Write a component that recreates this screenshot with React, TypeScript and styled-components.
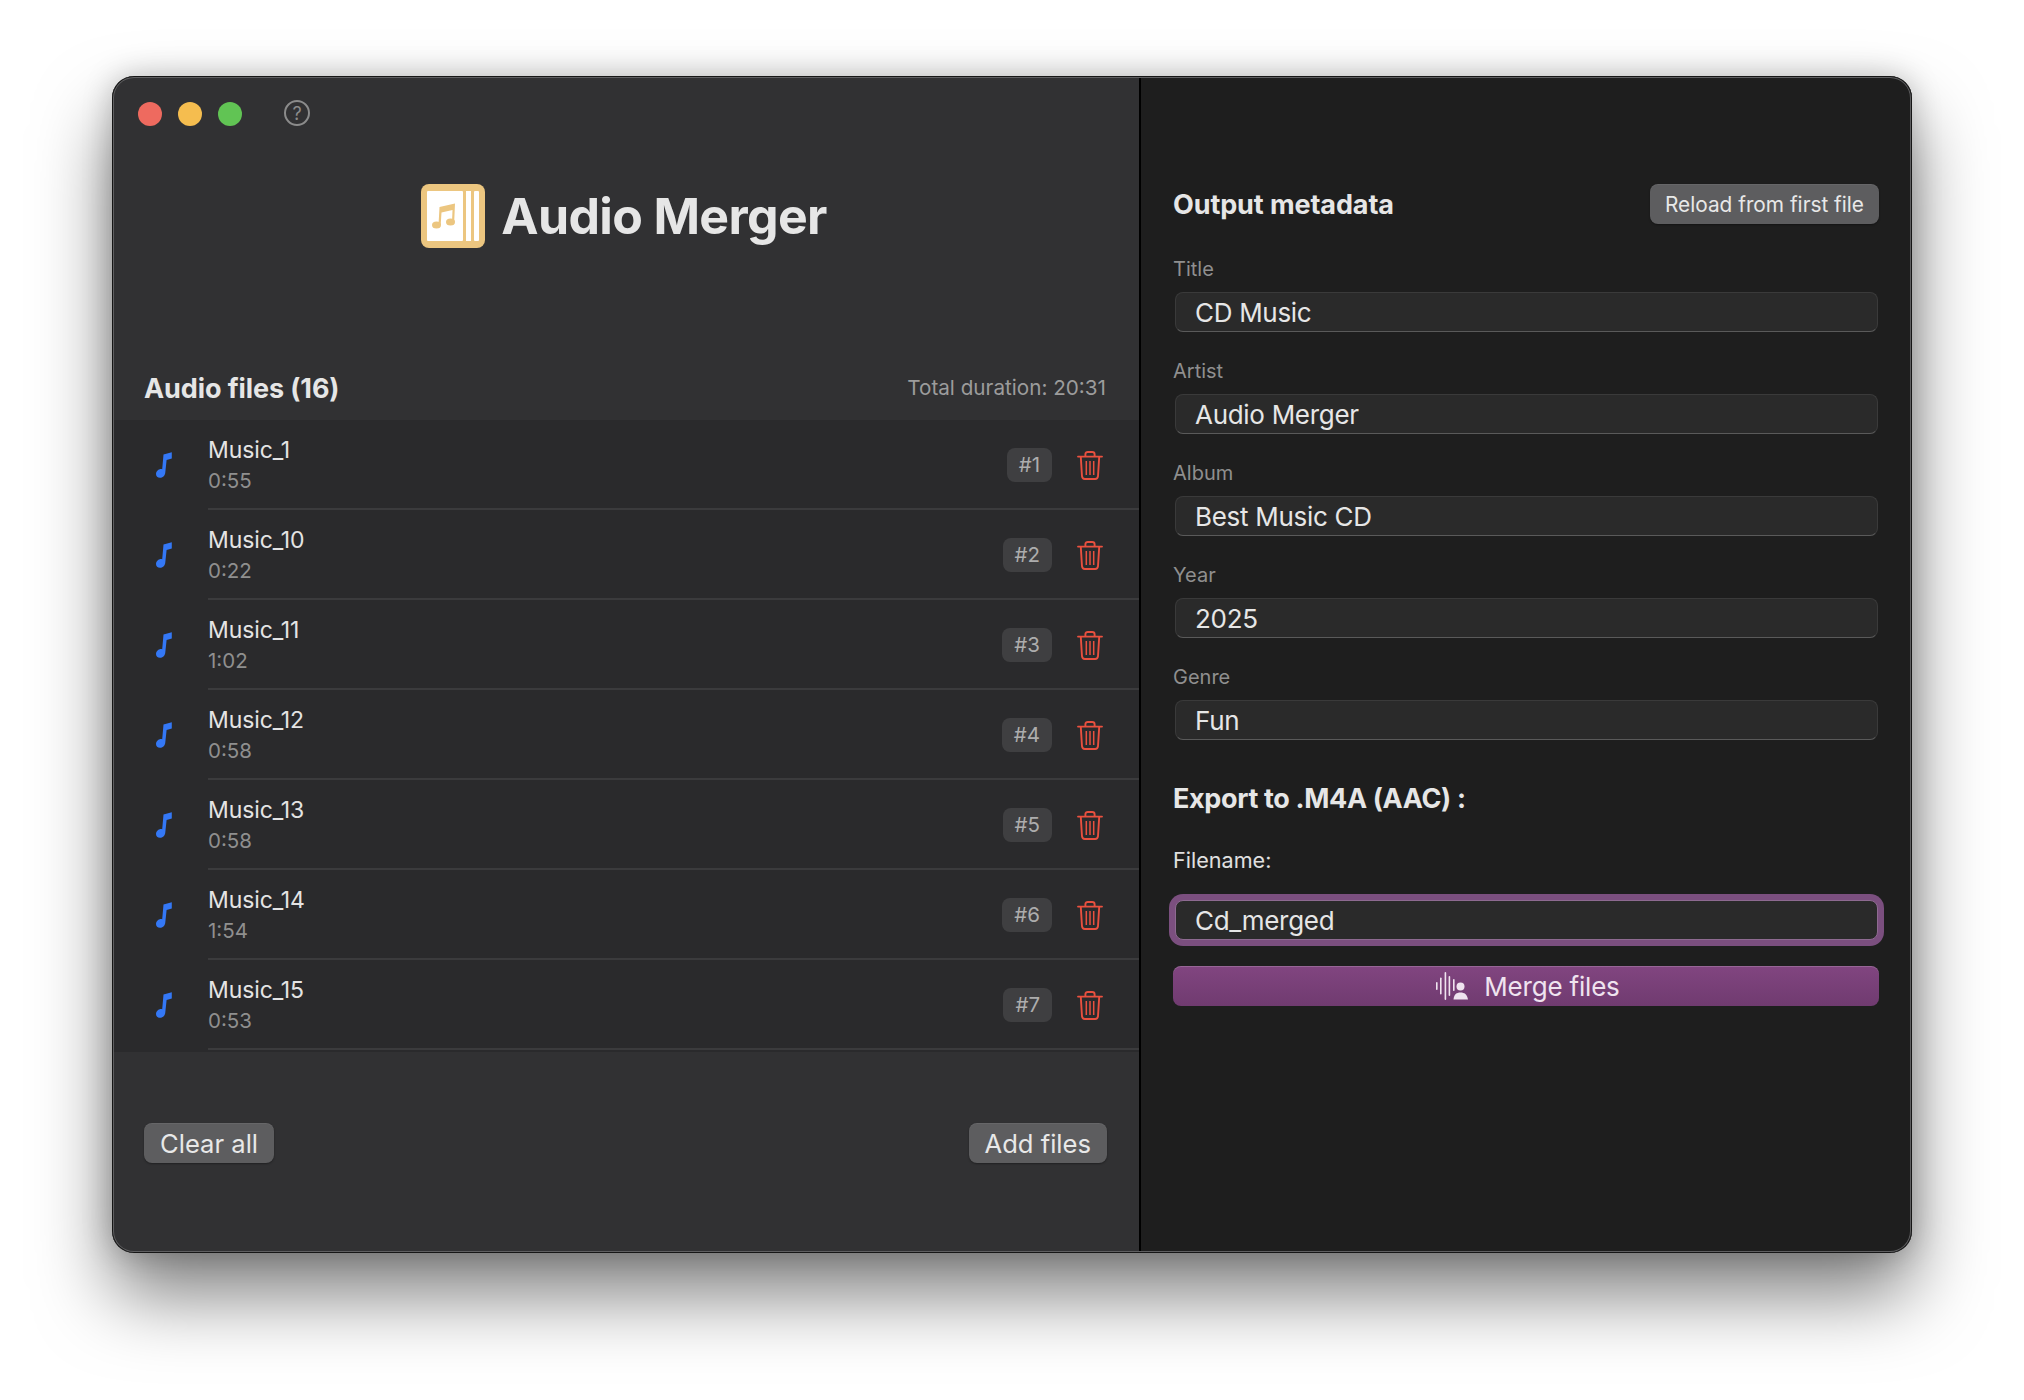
import * as React from 'react';
import styled, { createGlobalStyle } from 'styled-components';

const GlobalStyle = createGlobalStyle`
  html, body {
    margin: 0;
    padding: 0;
    background: #ffffff;
  }
  body {
    font-family: Inter, "Liberation Sans", sans-serif;
    -webkit-font-smoothing: antialiased;
  }
`;

const Page = styled.div`
  width: 2024px;
  height: 1400px;
  padding: 76px 0 0 112px;
  box-sizing: border-box;
  overflow: hidden;
`;

const Window = styled.div`
  position: relative;
  width: 1800px;
  height: 1177px;
  display: flex;
  border-radius: 22px;
  overflow: hidden;
  background: #1e1e1e;
  box-shadow: 0 42px 74px rgba(0, 0, 0, 0.5), 0 0 30px rgba(0, 0, 0, 0.22);

  /* hairline edge drawn over the panels */
  &::after {
    content: '';
    position: absolute;
    inset: 0;
    border-radius: inherit;
    pointer-events: none;
    box-shadow: inset 0 0 0 1px #161616, inset 0 0 0 2px #5f5f61;
  }
`;

const Sidebar = styled.section`
  width: 1027px;
  flex: none;
  display: flex;
  flex-direction: column;
  background: #313133;
`;

const Detail = styled.section`
  flex: 1;
  box-sizing: border-box;
  border-left: 2px solid #000;
  padding: 108px 33px 0 32px;
  display: flex;
  flex-direction: column;
  background: #1e1e1e;
`;

const TitleBar = styled.div`
  height: 77px;
  box-sizing: border-box;
  padding: 0 0 2px 26px;
  display: flex;
  align-items: center;
`;

const Light = styled.span<{ $color: string }>`
  width: 24px;
  height: 24px;
  border-radius: 50%;
  margin-right: 16px;
  background: ${(p) => p.$color};
`;

const HelpIcon = styled.span`
  width: 26px;
  height: 26px;
  box-sizing: border-box;
  margin-left: 26px;
  margin-bottom: 1px;
  border: 2px solid #8b8b8b;
  border-radius: 50%;
  color: #8b8b8b;
  font-size: 18px;
  display: flex;
  align-items: center;
  justify-content: center;
`;

const Hero = styled.div`
  height: 200px;
  box-sizing: border-box;
  padding: 31px 3px 0 0;
  display: flex;
  justify-content: center;
  align-items: flex-start;
  gap: 16px;
`;

const HeroTitle = styled.h1`
  margin: 0;
  height: 64px;
  line-height: 65px;
  font-size: 50px;
  font-weight: 700;
  letter-spacing: -0.65px;
  color: #e6e6e6;
`;

const ListHeader = styled.div`
  height: 67px;
  box-sizing: border-box;
  padding: 2px 33px 0 32px;
  display: flex;
  align-items: center;
  justify-content: space-between;
`;

const SectionTitle = styled.h2`
  margin: 0;
  padding-top: 2px;
  font-size: 27px;
  font-weight: 700;
  line-height: 30px;
  letter-spacing: -0.1px;
  color: #e6e6e6;
`;

const Duration = styled.span`
  font-size: 20.7px;
  color: #9c9c9c;
`;

const FileList = styled.div`
  height: 632px;
  flex: none;
  overflow: hidden;
  background: #2a2a2c;
`;

const FileRow = styled.div`
  height: 90px;
  display: flex;
`;

const NoteCell = styled.div`
  width: 96px;
  flex: none;
  box-sizing: border-box;
  padding-left: 44px;
  display: flex;
  align-items: center;
`;

const RowBody = styled.div`
  flex: 1;
  box-sizing: border-box;
  padding: 2px 36px 0 0;
  border-bottom: 2px solid #3b3b3d;
  display: flex;
  align-items: center;
`;

const RowText = styled.div`
  flex: 1;
  padding-top: 1px;
  display: flex;
  flex-direction: column;
`;

const FileName = styled.span`
  font-size: 23px;
  line-height: 30px;
  letter-spacing: -0.1px;
  color: #e4e4e4;
`;

const FileLength = styled.span`
  margin-top: 1px;
  font-size: 20.5px;
  line-height: 30px;
  color: #8f8f8f;
`;

const OrderBadge = styled.span`
  height: 34px;
  padding: 0 12px;
  border-radius: 8px;
  background: #3f3f41;
  color: #adadad;
  font-size: 20.5px;
  line-height: 34px;
`;

const TrashButton = styled.span`
  margin-left: 25px;
  display: flex;
`;

const Footer = styled.div`
  flex: 1;
  padding: 71px 32px 0 32px;
  display: flex;
  align-items: flex-start;
  justify-content: space-between;
`;

const GreyButton = styled.button<{ $small?: boolean }>`
  height: 40px;
  padding: 0 ${(p) => (p.$small ? 15 : 16)}px;
  border: none;
  border-radius: 8px;
  background: #5d5d5f;
  box-shadow: 0 1px 2px rgba(0, 0, 0, 0.35), inset 0 1px 0 rgba(255, 255, 255, 0.06);
  color: #e8e8e8;
  font-family: inherit;
  font-size: ${(p) => (p.$small ? 20.8 : 25.6)}px;
  display: flex;
  align-items: center;
`;

const MetaHeader = styled.div`
  display: flex;
  align-items: center;
  justify-content: space-between;
`;

const MetaFields = styled.div`
  margin-top: 33px;
  display: flex;
  flex-direction: column;
  gap: 27px;
`;

const Field = styled.div`
  display: flex;
  flex-direction: column;
`;

const FieldLabel = styled.label`
  font-size: 20px;
  line-height: 24px;
  color: #8f8f8f;
  margin-bottom: 11px;
`;

const FieldBox = styled.div<{ $focused?: boolean }>`
  height: 40px;
  box-sizing: border-box;
  margin: 0 1px 0 2px;
  padding-left: 19px;
  border-radius: 8px;
  background: #2a2a2a;
  border: 1px solid #3a3a3a;
  border-bottom-color: #5a5a5a;
  color: #e6e6e6;
  font-size: 26px;
  letter-spacing: -0.3px;
  display: flex;
  align-items: center;
  ${(p) => p.$focused && 'box-shadow: 0 0 0 6px #7b4f7f; border-color: #8d6a90; margin-top: 28px;'}
`;

const ExportTitle = styled(SectionTitle)`
  margin-top: 42px;
  letter-spacing: -0.35px;
`;

const FilenameLabel = styled.label`
  margin-top: 34px;
  font-size: 21.6px;
  line-height: 24px;
  color: #e0e0e0;
`;

const MergeButton = styled.button`
  height: 40px;
  margin-top: 26px;
  padding: 0 0 0 4px;
  border: none;
  border-radius: 8px;
  background: linear-gradient(#814580, #703b70);
  box-shadow: inset 0 1px 0 rgba(255, 255, 255, 0.18);
  color: #efe3ef;
  font-family: inherit;
  font-size: 26px;
  letter-spacing: -0.2px;
  display: flex;
  align-items: center;
  justify-content: center;
  gap: 15px;
`;

const LogoMark = () => (
  <svg width="64" height="64" viewBox="0 0 64 64">
    <rect width="64" height="64" rx="8" fill="#ecc680" />
    <rect x="6" y="7" width="36" height="50" rx="1" fill="#fff" />
    <rect x="45" y="7" width="5" height="50" fill="#fff" />
    <rect x="53" y="7" width="5" height="50" rx="1" fill="#fff" />
    <ellipse cx="15.5" cy="41" rx="4.5" ry="3.6" fill="#ecc680" />
    <ellipse cx="29.5" cy="38" rx="4.5" ry="3.6" fill="#ecc680" />
    <path d="M17.5 41 L18.5 23 L34 19.5 L33.2 38 H31 L31.5 26 L20.5 28.5 L19.7 41 Z" fill="#ecc680" />
  </svg>
);

const NoteIcon = () => (
  <svg width="16" height="26" viewBox="0 0 16 26">
    <path
      d="M7.5 2.6 L15.8 .2 V6.6 L10.6 8 L9.3 20.5 C9 24 6.5 25.8 4 25.8 C1.5 25.8 0 24.2 0 22 C0 19.2 2.6 17 5 17 C5.5 17 5.9 17.1 6.2 17.2 Z"
      fill="#3478f6"
    />
  </svg>
);

const TrashIcon = () => (
  <svg width="26" height="29" viewBox="0 0 26 29" fill="none" stroke="#e9503f" strokeWidth="1.9">
    <path d="M1 5.6 H25" strokeLinecap="round" />
    <path d="M8.4 5.4 V3.2 C8.4 1.8 9.4 1 10.8 1 H15.2 C16.6 1 17.6 1.8 17.6 3.2 V5.4" />
    <path d="M3.8 6 L5 25.2 C5.2 27 6.2 28 7.8 28 H18.2 C19.8 28 20.8 27 21 25.2 L22.2 6" />
    <path d="M9.3 10 V24 M13 10 V24 M16.7 10 V24" strokeWidth="1.5" />
  </svg>
);

const MergeIcon = () => (
  <svg width="33" height="28" viewBox="0 0 33 28" fill="#efe3ef">
    <rect x="0" y="10" width="1.6" height="8" rx=".8" />
    <rect x="4" y="5.5" width="1.6" height="17" rx=".8" />
    <rect x="8.6" y="0" width="1.6" height="28" rx=".8" />
    <rect x="12.6" y="4" width="1.6" height="20" rx=".8" />
    <rect x="17" y="7" width="1.6" height="12" rx=".8" />
    <circle cx="24.5" cy="14.5" r="4" />
    <path d="M17.5 27.6 C18 22.5 20.5 20.6 24.5 20.6 C28.5 20.6 31 22.5 32 27.6 Z" />
  </svg>
);

const files = [
  ['Music_1', '0:55'],
  ['Music_10', '0:22'],
  ['Music_11', '1:02'],
  ['Music_12', '0:58'],
  ['Music_13', '0:58'],
  ['Music_14', '1:54'],
  ['Music_15', '0:53'],
];

const metadata = [
  ['Title', 'CD Music'],
  ['Artist', 'Audio Merger'],
  ['Album', 'Best Music CD'],
  ['Year', '2025'],
  ['Genre', 'Fun'],
];

function App() {
  return (
    <Page>
      <GlobalStyle />
      <Window>
        <Sidebar>
          <TitleBar>
            <Light $color="#ee6a5f" />
            <Light $color="#f5bd4f" />
            <Light $color="#61c454" />
            <HelpIcon>?</HelpIcon>
          </TitleBar>
          <Hero>
            <LogoMark />
            <HeroTitle>Audio Merger</HeroTitle>
          </Hero>
          <ListHeader>
            <SectionTitle>Audio files (16)</SectionTitle>
            <Duration>Total duration: 20:31</Duration>
          </ListHeader>
          <FileList>
            {files.map(([name, length], i) => (
              <FileRow key={name}>
                <NoteCell>
                  <NoteIcon />
                </NoteCell>
                <RowBody>
                  <RowText>
                    <FileName>{name}</FileName>
                    <FileLength>{length}</FileLength>
                  </RowText>
                  <OrderBadge>#{i + 1}</OrderBadge>
                  <TrashButton>
                    <TrashIcon />
                  </TrashButton>
                </RowBody>
              </FileRow>
            ))}
          </FileList>
          <Footer>
            <GreyButton>Clear all</GreyButton>
            <GreyButton>Add files</GreyButton>
          </Footer>
        </Sidebar>
        <Detail>
          <MetaHeader>
            <SectionTitle>Output metadata</SectionTitle>
            <GreyButton $small>Reload from first file</GreyButton>
          </MetaHeader>
          <MetaFields>
            {metadata.map(([label, value]) => (
              <Field key={label}>
                <FieldLabel>{label}</FieldLabel>
                <FieldBox>{value}</FieldBox>
              </Field>
            ))}
          </MetaFields>
          <ExportTitle>Export to .M4A (AAC) :</ExportTitle>
          <FilenameLabel>Filename:</FilenameLabel>
          <FieldBox $focused>Cd_merged</FieldBox>
          <MergeButton>
            <MergeIcon />
            Merge files
          </MergeButton>
        </Detail>
      </Window>
    </Page>
  );
}

export default App;
